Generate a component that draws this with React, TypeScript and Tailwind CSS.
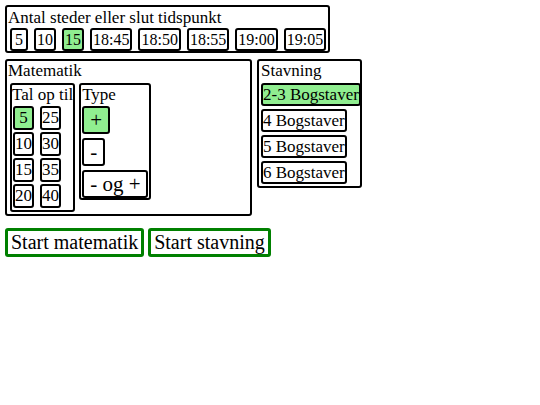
import React, { useState } from "react";

const serif = { fontFamily: '"Liberation Serif", "Times New Roman", serif' };

function Pick({
  label,
  active,
  onClick,
  className = "",
}: {
  label: string;
  active?: boolean;
  onClick?: () => void;
  className?: string;
}) {
  return (
    <button
      onClick={onClick}
      className={`border-2 border-black rounded-[3px] text-black ${
        active ? "bg-[#90ee90]" : "bg-white"
      } ${className}`}
    >
      {label}
    </button>
  );
}

export default function App() {
  const [count, setCount] = useState("15");
  const [limit, setLimit] = useState("5");
  const [op, setOp] = useState("+");
  const [letters, setLetters] = useState("2-3 Bogstaver");

  const counts = ["5", "10", "15", "18:45", "18:50", "18:55", "19:00", "19:05"];
  const limits = ["5", "10", "15", "20", "25", "30", "35", "40"];
  const ops = ["+", "-", "- og +"];
  const words = ["2-3 Bogstaver", "4 Bogstaver", "5 Bogstaver", "6 Bogstaver"];

  return (
    <div className="min-h-[405px] w-[540px] bg-white p-[5px] text-black" style={serif}>
      {/* Antal / tidspunkt */}
      <div className="inline-flex flex-col border-2 border-black rounded-[3px] px-[1px]">
        <div className="text-[17px] leading-[21px]">Antal steder eller slut tidspunkt</div>
        <div className="flex gap-[6px] pl-[2px] pr-[1px]">
          {counts.map((c) => (
            <Pick
              key={c}
              label={c}
              active={count === c}
              onClick={() => setCount(c)}
              className="min-w-[18px] px-[1px] text-[16px] leading-[19px]"
            />
          ))}
        </div>
      </div>

      <div className="mt-[6px] flex items-start gap-[5px]">
        {/* Matematik */}
        <div className="w-[247px] border-2 border-black rounded-[3px] px-[1px] pb-[2px]">
          <div className="text-[17px] leading-[20px]">Matematik</div>
          <div className="mt-[2px] ml-[2px] flex items-start gap-[4px]">
            <div className="border-2 border-black rounded-[3px] pb-[2px]">
              <div className="text-[17px] leading-[20px]">Tal op til</div>
              <div className="mt-[1px] ml-[1px] grid grid-flow-col grid-rows-4 justify-start gap-x-[6px] gap-y-[2px]">
                {limits.map((l) => (
                  <Pick
                    key={l}
                    label={l}
                    active={limit === l}
                    onClick={() => setLimit(l)}
                    className="text-[17px] leading-[20px]"
                  />
                ))}
              </div>
            </div>
            <div className="flex flex-col items-start border-2 border-black rounded-[3px] px-[1px]">
              <div className="text-[17px] leading-[20px]">Type</div>
              <div className="mt-[1px] flex flex-col items-start gap-[4px]">
                {ops.map((o) => (
                  <Pick
                    key={o}
                    label={o}
                    active={op === o}
                    onClick={() => setOp(o)}
                    className="px-[6px] text-[21px] leading-[24px]"
                  />
                ))}
              </div>
            </div>
          </div>
        </div>

        {/* Stavning */}
        <div className="w-[105px] border-2 border-black rounded-[3px] px-[2px] pb-[2px]">
          <div className="text-[17px] leading-[20px]">Stavning</div>
          <div className="mt-[2px] flex flex-col items-start gap-[3px]">
            {words.map((w) => (
              <Pick
                key={w}
                label={w}
                active={letters === w}
                onClick={() => setLetters(w)}
                className="whitespace-nowrap text-[17px] leading-[19px]"
              />
            ))}
          </div>
        </div>
      </div>

      <div className="mt-[12px] flex gap-[4px]">
        <button className="border-[3px] border-[#008000] rounded-[3px] bg-white px-[3px] text-[20px] leading-[23px]">
          Start matematik
        </button>
        <button className="border-[3px] border-[#008000] rounded-[3px] bg-white px-[3px] text-[20px] leading-[23px]">
          Start stavning
        </button>
      </div>
    </div>
  );
}
